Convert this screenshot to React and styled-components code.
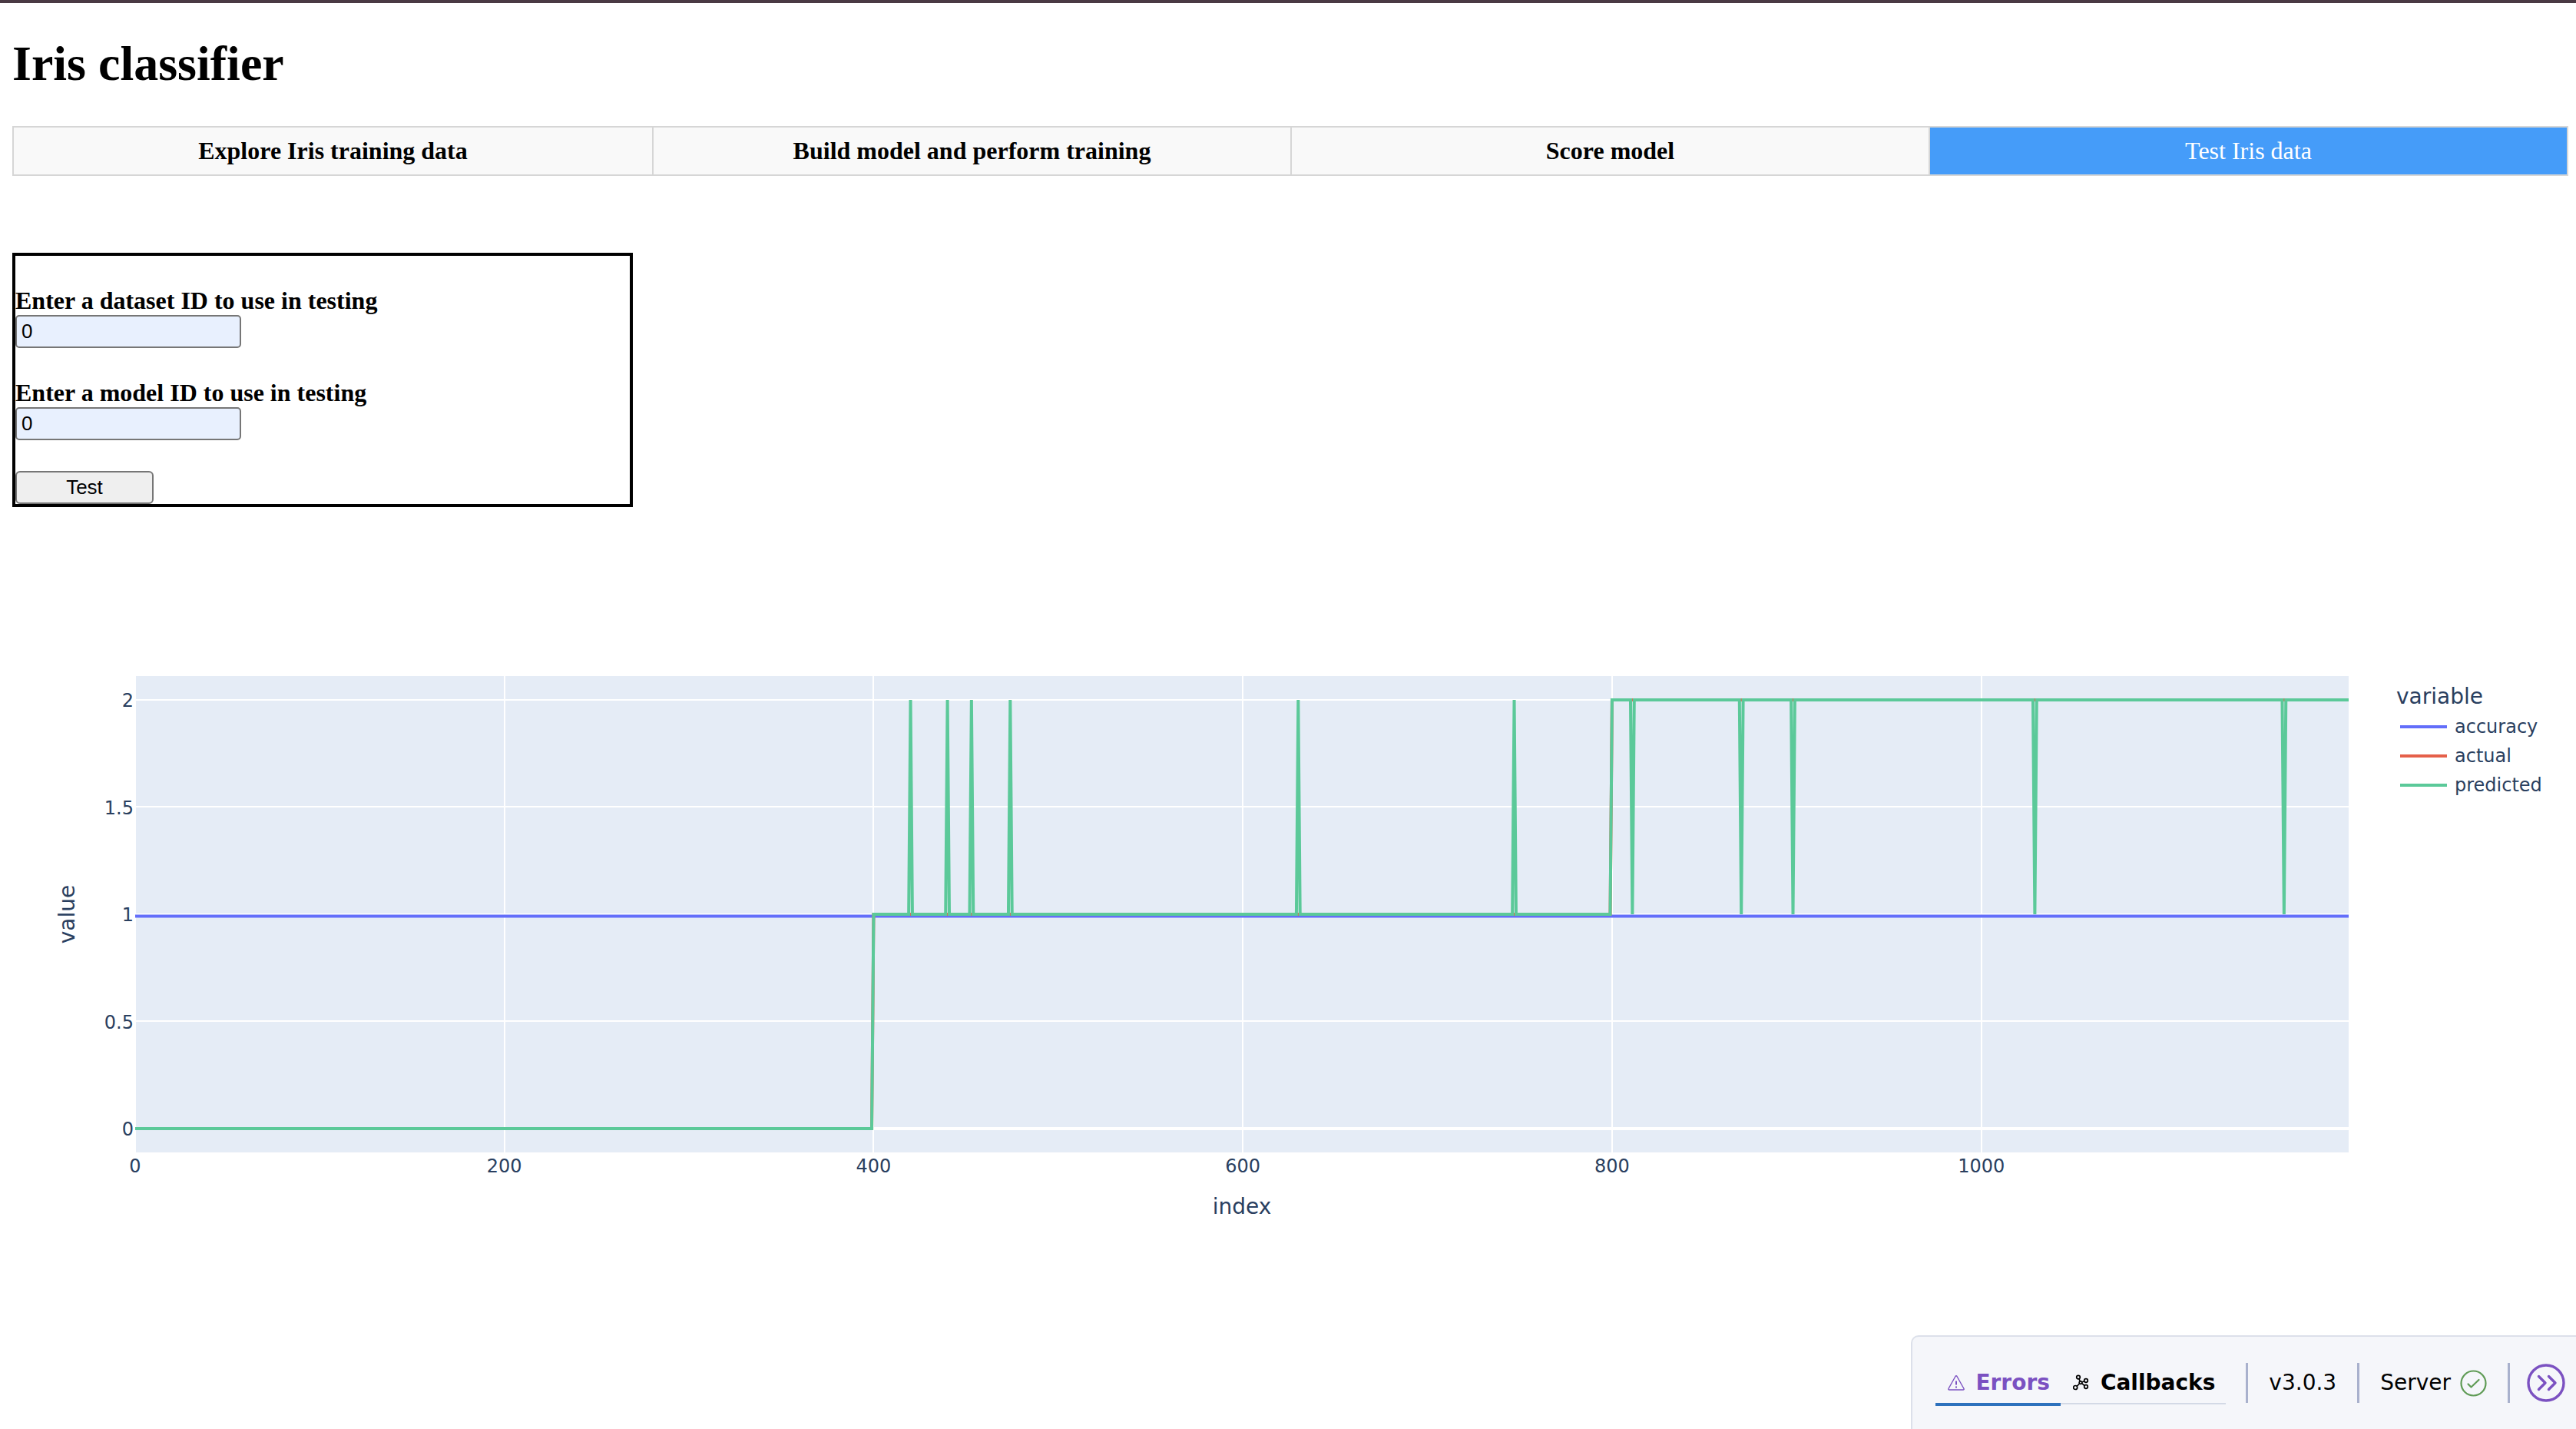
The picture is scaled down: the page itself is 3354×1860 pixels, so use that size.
import React from "react";
import styled, { createGlobalStyle, css } from "styled-components";

const serif = '"Liberation Serif", "Times New Roman", serif';
const sans = '"Liberation Sans", Arial, sans-serif';
const chartSans = '"DejaVu Sans", Verdana, sans-serif';
const ink = "#2a3f5f";

const GlobalStyle = createGlobalStyle`
  *, *::before, *::after { box-sizing: border-box; }
  body { margin: 0; background: #fff; color: #000; font-family: ${serif}; font-size: 32px; }
`;

const Page = styled.div`
  border-top: 4px solid #4a3a44;
  padding: 42px 10px 0 16px;
`;

const Title = styled.h1`
  margin: 0 0 44px;
  font-size: 64px;
  line-height: 74px;
`;

const Tabs = styled.div`
  display: grid;
  grid-template-columns: repeat(4, 1fr);
  border: 2px solid #d6d6d6;
`;

const Tab = styled.button`
  border: 0;
  border-left: 2px solid #d6d6d6;
  padding: 12px;
  background: #f9f9f9;
  color: #000;
  font: bold 32px/37px ${serif};
  cursor: pointer;
  &:first-child { border-left: 0; }
  ${(p) => p.$active && css`
    background: #459cf9;
    color: #fff;
    font-weight: normal;
  `}
`;

const TestForm = styled.form`
  max-width: 808px;
  margin: 100px 0;
  border: 4px solid #000;
  padding-top: 40px;
  display: flex;
  flex-direction: column;
  align-items: flex-start;
`;

const Field = styled.div`
  display: flex;
  flex-direction: column;
  margin-bottom: 40px;
`;

const Label = styled.label`
  font-weight: bold;
  line-height: 37px;
`;

const Input = styled.input`
  width: 294px;
  height: 43px;
  border: 2px solid #767676;
  border-radius: 5px;
  padding: 0 6px;
  background: #e8f0fe;
  color: #000;
  font: 26px ${sans};
`;

const TestButton = styled.button`
  width: 180px;
  height: 43px;
  border: 2px solid #767676;
  border-radius: 6px;
  padding: 0;
  background: #efefef;
  color: #000;
  font: 26px ${sans};
`;

const Figure = styled.section`
  display: flex;
  align-items: flex-start;
`;

const Plot = styled.svg`
  flex: 1;
  min-width: 0;
  overflow: visible;
  font-family: ${chartSans};
  font-size: 24px;
  fill: ${ink};
`;

const Legend = styled.div`
  width: 286px;
  padding: 127px 0 0 62px;
  color: ${ink};
  font-family: ${chartSans};
`;

const LegendTitle = styled.div`
  font-size: 28px;
  line-height: 40px;
`;

const LegendList = styled.ul`
  list-style: none;
  margin: 0;
  padding: 0 0 0 5px;
`;

const LegendItem = styled.li`
  display: flex;
  align-items: center;
  gap: 10px;
  font-size: 24px;
  line-height: 38px;
  &::before {
    content: "";
    width: 61px;
    height: 4px;
    background: ${(p) => p.$color};
  }
`;

const DevBar = styled.footer`
  position: fixed;
  right: 0;
  bottom: 0;
  display: flex;
  align-items: flex-start;
  height: 122px;
  border: 2px solid #dce0ea;
  border-width: 2px 0 0 2px;
  border-top-left-radius: 10px;
  padding: 34px 14px 0 30px;
  background: #f5f6fa;
  font-family: ${chartSans};
  font-size: 28px;
  line-height: 52px;
`;

const DevTab = styled.button`
  display: flex;
  align-items: center;
  gap: 14px;
  height: 56px;
  border: 0;
  padding: 0 14px 4px 16px;
  background: none;
  box-shadow: inset 0 -2px #f5f6fa, inset 0 -4px #d3d9e6;
  color: #000;
  font: bold 28px/52px ${chartSans};
  ${(p) => p.$active && css`
    box-shadow: inset 0 -4px #2d71bd;
    color: #7b51c1;
  `}
`;

const DevItem = styled.div`
  display: flex;
  align-items: center;
  gap: 12px;
  height: 52px;
  border-left: 3px solid #a9b1cd;
  padding: 0 27px;
`;

const Spacer = styled.div`
  width: 26px;
`;

const CollapseButton = styled.button`
  display: flex;
  align-items: center;
  height: 52px;
  border: 0;
  border-left: 3px solid #a9b1cd;
  padding: 0 0 0 22px;
  background: none;
`;

const tabs = ["Explore Iris training data", "Build model and perform training", "Score model", "Test Iris data"];

const LAST = 1199;
const X0 = 160;
const X1 = 3042;
const sx = (i) => X0 + ((X1 - X0) * i) / LAST;
const sy = (v) => 709 - 279 * v;

const line = (points) => points.map(([i, v], n) => `${n ? "L" : "M"}${sx(i).toFixed(2)},${sy(v).toFixed(2)}`).join("");
const excursions = (list, base, peak) => list.flatMap((i) => [[i - 1, base], [i, peak], [i + 1, base]]);

const accuracy = line([[0, 0.991], [LAST, 0.991]]);
const actual = line([[0, 0], [399, 0], [400, 1], [799, 1], [800, 2], [LAST, 2]]);
const predicted = line([
  [0, 0], [399, 0], [400, 1],
  ...excursions([420, 440, 453, 474, 630, 747], 1, 2),
  [799, 1], [800, 2],
  ...excursions([811, 870, 898, 1029, 1164], 2, 1),
  [LAST, 2],
]);

const series = [
  { name: "accuracy", color: "#636efa", path: accuracy },
  { name: "actual", color: "#e5604a", path: actual },
  { name: "predicted", color: "#5bc999", path: predicted },
];

function Chart() {
  return (
    <Figure aria-label="Test results">
      <Plot viewBox="0 0 3042 900" role="img" aria-label="accuracy, actual and predicted value by index">
        <rect x={X0 + 1} y="120" width={X1 - X0 - 1} height="620" fill="#e5ecf6" />
        <g stroke="#fff" strokeWidth="2" shapeRendering="crispEdges">
          {[200, 400, 600, 800, 1000].map((i) => (
            <line key={i} x1={Math.round(sx(i))} x2={Math.round(sx(i))} y1="120" y2="740" />
          ))}
          {[0.5, 1, 1.5, 2].map((v) => (
            <line key={v} x1={X0 + 1} x2={X1} y1={Math.floor(sy(v))} y2={Math.floor(sy(v))} />
          ))}
          <line x1={X0 + 1} x2={X1} y1={sy(0)} y2={sy(0)} strokeWidth="4" />
        </g>
        {series.map((s) => (
          <path key={s.name} d={s.path} fill="none" stroke={s.color} strokeWidth="4" strokeMiterlimit="2" />
        ))}
        <g textAnchor="middle">
          {[0, 200, 400, 600, 800, 1000].map((i) => (
            <text key={i} x={sx(i)} y="766">{i}</text>
          ))}
        </g>
        <g textAnchor="end">
          {[0, 0.5, 1, 1.5, 2].map((v) => (
            <text key={v} x="158" y={sy(v) + 9}>{v}</text>
          ))}
        </g>
        <g textAnchor="middle" fontSize="28">
          <text x={(X0 + X1) / 2} y="820">index</text>
          <text transform="translate(81 430) rotate(-90)">value</text>
        </g>
      </Plot>
      <Legend>
        <LegendTitle>variable</LegendTitle>
        <LegendList>
          {series.map((s) => (
            <LegendItem key={s.name} $color={s.color}>{s.name}</LegendItem>
          ))}
        </LegendList>
      </Legend>
    </Figure>
  );
}

const WarningIcon = () => (
  <svg width="22" height="22" viewBox="0 0 22 22" fill="none" stroke="currentColor" strokeWidth="1.4" strokeLinejoin="round" aria-hidden="true">
    <path d="M10 2.500Q11 1 12 2.500L21 18.500Q21.500 20 20 20H2Q.5 20 1 18.500Z" />
    <path d="M11 8.500v5M11 15.500v2" strokeWidth="2" />
  </svg>
);

const GraphIcon = () => (
  <svg width="22" height="22" viewBox="0 0 22 22" fill="none" stroke="currentColor" strokeWidth="1.7" aria-hidden="true">
    <circle cx="7" cy="3.6" r="2.3" />
    <circle cx="17" cy="8" r="2.3" />
    <circle cx="3.2" cy="17" r="2.5" />
    <circle cx="17" cy="16" r="2.3" />
    <circle cx="10" cy="10.600" r="1.800" />
    <path d="M8 5.800l1.300 3.100M11.800 10l3-1.200M8.500 12l-3.400 3.300M11.600 11.600l3.500 3" />
  </svg>
);

const CheckIcon = () => (
  <svg width="35" height="35" viewBox="0 0 35 35" fill="none" stroke="#5f9b55" strokeWidth="2.2" strokeLinecap="round" strokeLinejoin="round" aria-hidden="true">
    <circle cx="17.5" cy="17.5" r="16" />
    <path d="M10.500 18.500l4 4 10-9.500" />
  </svg>
);

const CollapseIcon = () => (
  <svg width="50" height="50" viewBox="0 0 50 50" fill="none" stroke="#7b51c1" strokeWidth="3.4" strokeLinecap="round" strokeLinejoin="round" aria-hidden="true">
    <circle cx="25" cy="25" r="23" />
    <path d="M15.500 16.500l8.500 8.500-8.500 8.500M28.500 16.500l8.500 8.500-8.500 8.500" />
  </svg>
);

export default function App() {
  return (
    <>
      <GlobalStyle />
      <Page>
        <Title>Iris classifier</Title>
        <Tabs role="tablist">
          {tabs.map((t, n) => (
            <Tab key={t} type="button" role="tab" aria-selected={n === 3} $active={n === 3}>{t}</Tab>
          ))}
        </Tabs>
        <TestForm onSubmit={(e) => e.preventDefault()}>
          <Field>
            <Label htmlFor="dataset-id">Enter a dataset ID to use in testing</Label>
            <Input id="dataset-id" defaultValue="0" />
          </Field>
          <Field>
            <Label htmlFor="model-id">Enter a model ID to use in testing</Label>
            <Input id="model-id" defaultValue="0" />
          </Field>
          <TestButton type="submit">Test</TestButton>
        </TestForm>
        <Chart />
      </Page>
      <DevBar>
        <DevTab type="button" $active><WarningIcon />Errors</DevTab>
        <DevTab type="button"><GraphIcon />Callbacks</DevTab>
        <Spacer />
        <DevItem>v3.0.3</DevItem>
        <DevItem>Server<CheckIcon /></DevItem>
        <CollapseButton type="button" aria-label="Collapse"><CollapseIcon /></CollapseButton>
      </DevBar>
    </>
  );
}
